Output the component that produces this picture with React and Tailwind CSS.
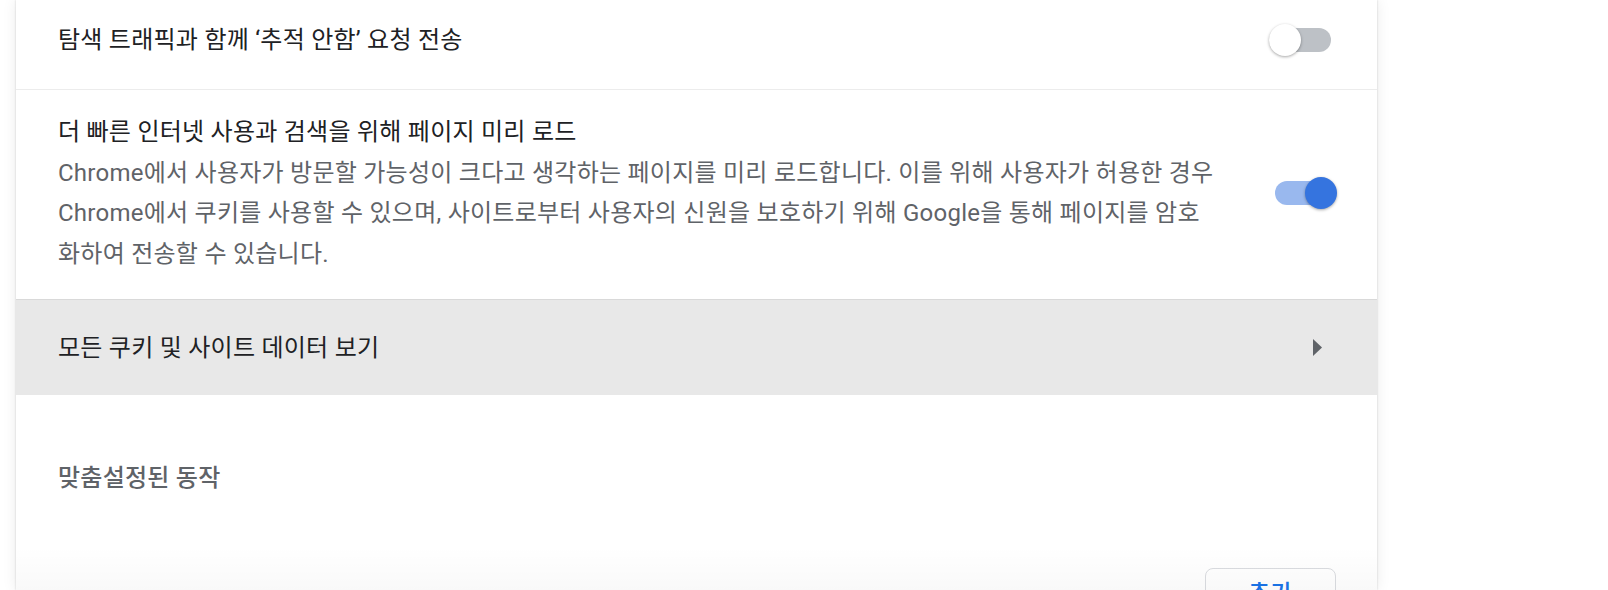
import React, { useState } from "react";

const font = { fontFamily: 'Roboto, "Noto Sans CJK KR", sans-serif' };

function Toggle({ on, onClick }) {
  return (
    <button
      type="button"
      onClick={onClick}
      className={`relative w-[56px] h-[24px] rounded-full shrink-0 ${
        on ? "bg-[#99b8ee]" : "bg-[#bdc1c6]"
      }`}
    >
      <span
        className={`absolute top-[-4px] w-[32px] h-[32px] rounded-full shadow-[0_1px_3px_rgba(0,0,0,0.35)] ${
          on ? "left-[30px] bg-[#3574df]" : "left-[-6px] bg-white"
        }`}
      />
    </button>
  );
}

function App() {
  const [dnt, setDnt] = useState(false);
  const [preload, setPreload] = useState(true);

  return (
    <div className="h-[590px] overflow-hidden bg-white pl-[16px] text-[24px] tracking-[0.25px]" style={font}>
      <div className="relative w-[1361px] h-[590px] overflow-hidden bg-white shadow-[0_0_2px_rgba(0,0,0,0.18),0_0_14px_rgba(0,0,0,0.08)]">
        <div className="flex items-center justify-between h-[90px] pb-[9px] pl-[42px] pr-[46px] border-b border-[#ececec] text-[#202124]">
          <span>탐색 트래픽과 함께 ‘추적 안함’ 요청 전송</span>
          <Toggle on={dnt} onClick={() => setDnt(!dnt)} />
        </div>

        <div className="flex items-center justify-between pt-[22px] pb-[25px] pl-[42px] pr-[46px] leading-[40.5px]">
          <div className="whitespace-nowrap">
            <div className="text-[#202124]">더 빠른 인터넷 사용과 검색을 위해 페이지 미리 로드</div>
            <div className="text-[#5f6368]">
              Chrome에서 사용자가 방문할 가능성이 크다고 생각하는 페이지를 미리 로드합니다. 이를 위해 사용자가 허용한 경우
              <br />
              Chrome에서 쿠키를 사용할 수 있으며, 사이트로부터 사용자의 신원을 보호하기 위해 Google을 통해 페이지를 암호
              <br />
              화하여 전송할 수 있습니다.
            </div>
          </div>
          <Toggle on={preload} onClick={() => setPreload(!preload)} />
        </div>

        <div className="flex items-center justify-between h-[96px] border-t border-[#d9d9d9] bg-[#e8e8e8] pl-[42px] pr-[55px] text-[#202124] cursor-pointer">
          <span>모든 쿠키 및 사이트 데이터 보기</span>
          <svg width="9" height="17" viewBox="0 0 9 17">
            <path d="M0 0 L9 8.5 L0 17 Z" fill="#5f6368" />
          </svg>
        </div>

        <div className="pt-[63px] pl-[42px] leading-[40.5px] font-medium text-[#5f6368]">
          맞춤설정된 동작
        </div>

        <div className="flex justify-end pt-[69px] pr-[41px]">
          <button
            type="button"
            className="w-[131px] h-[52px] rounded-[8px] border border-[#dadce0] bg-white font-medium text-[#1a73e8]"
          >
            추가
          </button>
        </div>

        <div className="pointer-events-none absolute left-0 right-0 bottom-0 h-[44px] bg-gradient-to-b from-transparent to-[rgba(0,0,0,0.025)]" />
      </div>
    </div>
  );
}

export default App;
